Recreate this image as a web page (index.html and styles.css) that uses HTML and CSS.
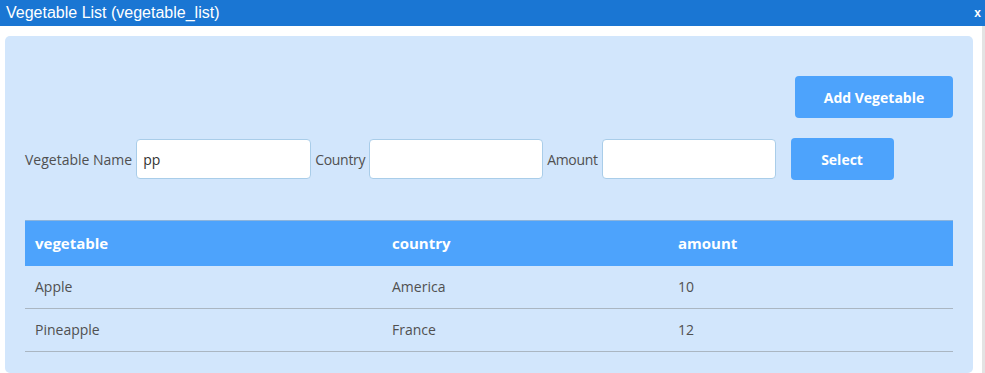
FILE: index.html
```html
<!DOCTYPE html>
<html lang="en">

<head>
    <meta charset="UTF-8">
    <meta name="viewport" content="width=device-width, initial-scale=1.0">
    <title>Vegetable List</title>
    <link rel="stylesheet" href="styles.css">
</head>

<body>
    <div class="titlebar">
        <span class="title">Vegetable List (vegetable_list)</span>
        <span class="close">x</span>
    </div>

    <div class="window">
        <div class="panel">
            <div class="toolbar">
                <button type="button" class="btn btn-add">Add Vegetable</button>
            </div>

            <form class="search" id="searchForm">
                <label>Vegetable Name</label>
                <input type="text" class="field" id="name" value="pp">
                <label class="tight">Country</label>
                <input type="text" class="field field-sm" id="country">
                <label class="tighter">Amount</label>
                <input type="text" class="field field-sm" id="amount">
                <button type="submit" class="btn btn-select">Select</button>
            </form>

            <table class="list">
                <thead>
                    <tr>
                        <th class="col-veg">vegetable</th>
                        <th class="col-country">country</th>
                        <th>amount</th>
                    </tr>
                </thead>
                <tbody>
                    <tr>
                        <td>Apple</td>
                        <td>America</td>
                        <td>10</td>
                    </tr>
                    <tr>
                        <td>Pineapple</td>
                        <td>France</td>
                        <td>12</td>
                    </tr>
                </tbody>
            </table>
        </div>
    </div>
</body>

</html>
```

FILE: styles.css
```css
body {
    margin: 0;
    background: #ffffff;
    font-family: "Open Sans", "Noto Sans", sans-serif;
    color: #505050;
    font-size: 14px;
}

.titlebar {
    height: 26px;
    background: #1a76d3;
    color: #fff;
    display: flex;
    align-items: center;
    justify-content: space-between;
    padding: 0 4px 0 6px;
}

.title {
    font-family: "Liberation Sans", Arial, sans-serif;
    font-size: 16px;
}

.close {
    font-family: "Liberation Sans", Arial, sans-serif;
    font-weight: bold;
    font-size: 12px;
}

.window {
    padding: 10px 9px 1px 5px;
    border-right: 3px solid #e3e3e3;
}

.panel {
    background: #d2e6fc;
    border-radius: 5px;
    padding: 40px 20px 21px 20px;
}

.toolbar {
    display: flex;
    justify-content: flex-end;
    margin-bottom: 20px;
}

.btn {
    background: #4da3fc;
    color: #fff;
    border: none;
    border-radius: 4px;
    height: 42px;
    font-family: "Open Sans", "Noto Sans", sans-serif;
    font-weight: bold;
    font-size: 14px;
}

.btn-add {
    width: 158px;
}

.search {
    display: flex;
    align-items: center;
    height: 42px;
    margin-bottom: 40px;
}

.search label {
    margin-right: 4px;
}

.search .tight {
    letter-spacing: -0.3px;
}

.search .tighter {
    letter-spacing: -0.35px;
}

.field {
    width: 175px;
    height: 40px;
    box-sizing: border-box;
    border: 1px solid #a9cde9;
    border-radius: 4px;
    background: #fff;
    padding: 0 6px;
    margin-right: 4px;
    font-family: inherit;
    font-size: 14px;
    color: #333;
}

.field-sm {
    width: 174px;
}

.btn-select {
    width: 103px;
    margin-left: 11px;
}

.list {
    width: 100%;
    border-collapse: collapse;
}

.list th {
    background: #4da3fc;
    color: #fff;
    text-align: left;
    height: 43px;
    padding: 0 10px 2px;
    font-size: 15px;
    border-top: 1px solid #8cb4dc;
}

.list td {
    height: 40px;
    padding: 0 10px 2px;
    border-bottom: 1px solid #aab6c2;
}

.col-veg {
    width: 337px;
}

.col-country {
    width: 266px;
}
```
